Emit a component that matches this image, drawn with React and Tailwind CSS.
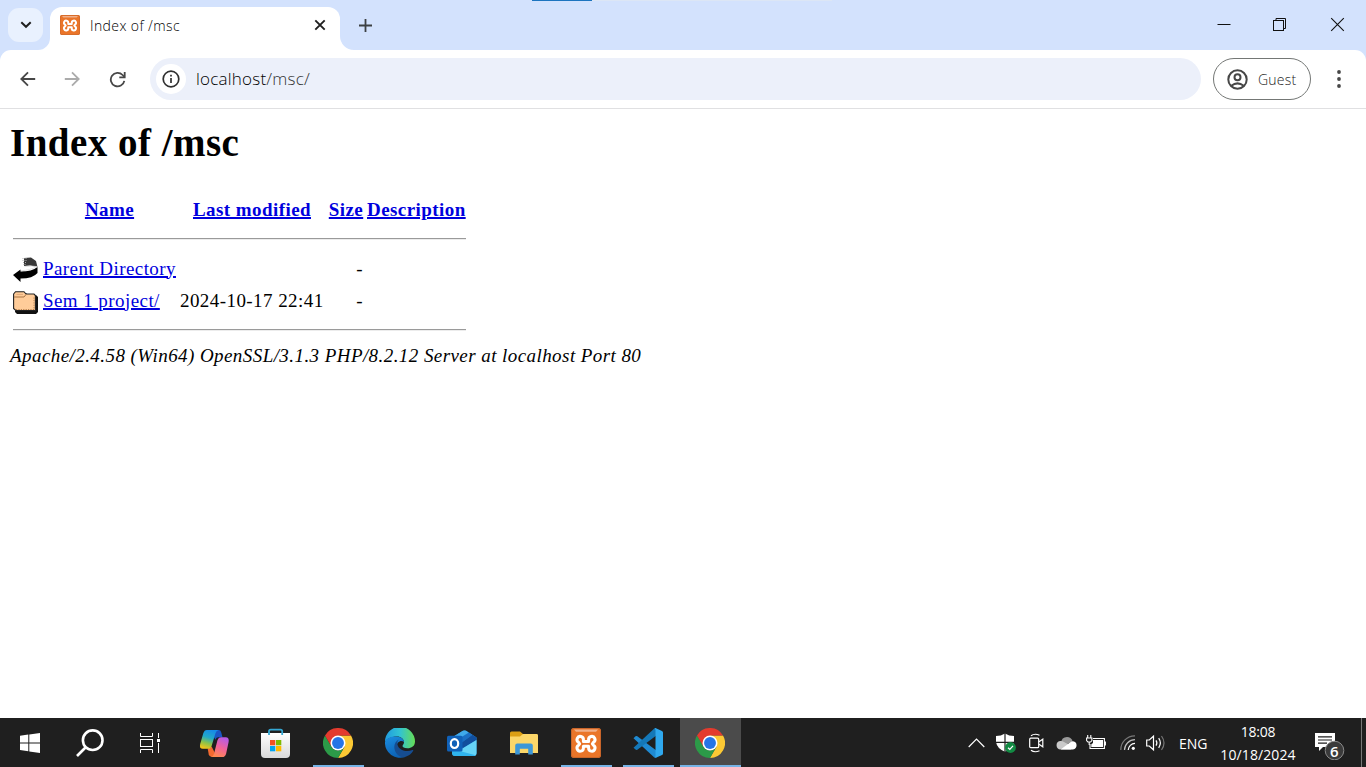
const Xampp = ({ size }) => (
  <svg width={size} height={size} viewBox="0 0 30 30" className="shrink-0">
    <rect width="30" height="30" rx="3" fill="#ea7529" />
    <rect x="0.5" y="0.5" width="29" height="29" rx="2.5" fill="none" stroke="#c9652a" />
    <path d="M3 1.5H27L25 3.8H5Z" fill="#f0b08a" />
    <path
      d="M12.4 12V13.6H17.6V12A3.2 3.2 0 1 1 22.4 14.4L21.4 15.8L22.4 17.2A3.2 3.2 0 1 1 17.6 19.8V18.2H12.4V19.8A3.2 3.2 0 1 1 7.6 17.2L8.6 15.8L7.6 14.4A3.2 3.2 0 1 1 12.4 12Z"
      fill="none"
      stroke="#fff"
      strokeWidth="3"
      strokeLinejoin="round"
    />
  </svg>
);

const Chrome = () => (
  <svg width="30" height="30" viewBox="0 0 48 48">
    <path d="M24 12H44.8A24 24 0 0 1 24 48L34.4 30Z" fill="#fcc934" />
    <path d="M3.2 12L13.6 30A12 12 0 0 0 34.4 30L24 48A24 24 0 0 1 3.2 12Z" fill="#2c9a48" />
    <path d="M3.2 12L13.6 30L24 12H44.8A24 24 0 0 0 3.2 12Z" fill="#e33b2e" />
    <circle cx="24" cy="24" r="12" fill="#fff" />
    <circle cx="24" cy="24" r="9.5" fill="#2674e6" />
  </svg>
);

const Copilot = () => (
  <svg width="31" height="29" viewBox="0 0 32 30">
    <defs>
      <linearGradient id="cpA" x1="0.6" y1="0" x2="0.3" y2="1">
        <stop offset="0" stopColor="#168be8" />
        <stop offset="0.4" stopColor="#22a9c8" />
        <stop offset="0.7" stopColor="#8bc34a" />
        <stop offset="1" stopColor="#f5c518" />
      </linearGradient>
      <linearGradient id="cpB" x1="0.7" y1="0" x2="0.3" y2="1">
        <stop offset="0" stopColor="#b45be8" />
        <stop offset="0.5" stopColor="#f0629a" />
        <stop offset="1" stopColor="#ff8a4c" />
      </linearGradient>
    </defs>
    <path d="M15 1H20.5Q22.3 1 23 3.5L24.3 8.5H20Q17.8 8.5 17 11L14 6Z" fill="#1a55c4" />
    <path d="M9 20.5L13 18L16 24L15.5 29H13Q10.8 29 10 26Z" fill="#f26a30" />
    <path d="M8 1H20Q17.8 1.6 17 4.5L13 17.5Q12 20.5 9 20.5H4Q0 20.5 1.2 15.5L4.4 4.5Q5.5 1 8 1Z" fill="url(#cpA)" />
    <path d="M24 29H12.5Q14.7 28.5 15.5 25.5L19 12Q20 8.5 23 8.5H27.5Q31.5 8.5 30.6 13.5L28 25.5Q27 29 24 29Z" fill="url(#cpB)" />
  </svg>
);

const Store = () => (
  <svg width="30" height="30" viewBox="0 0 30 30">
    <defs>
      <linearGradient id="st" x1="0" y1="0" x2="0" y2="1">
        <stop offset="0" stopColor="#fff" />
        <stop offset="1" stopColor="#d9d9d9" />
      </linearGradient>
    </defs>
    <path d="M0 5H29V26Q29 30 25 30H4Q0 30 0 26Z" fill="url(#st)" />
    <path d="M8 7V3.2Q8 1.6 9.7 1.6H19.5Q21.2 1.6 21.2 3.2V7" fill="none" stroke="#35a8d4" strokeWidth="1.8" />
    <rect x="9" y="12" width="5.3" height="5.3" fill="#f25022" />
    <rect x="15" y="12" width="5.3" height="5.3" fill="#7fba00" />
    <rect x="9" y="18" width="5.3" height="5.3" fill="#00a4ef" />
    <rect x="15" y="18" width="5.3" height="5.3" fill="#ffb900" />
  </svg>
);

const Edge = () => (
  <svg width="30" height="30" viewBox="0 0 30 30">
    <defs>
      <linearGradient id="edA" x1="0" y1="0.4" x2="1" y2="0.4">
        <stop offset="0" stopColor="#1f9be0" />
        <stop offset="0.5" stopColor="#32c3d2" />
        <stop offset="1" stopColor="#66dd55" />
      </linearGradient>
      <linearGradient id="edB" x1="0" y1="0" x2="0.4" y2="1">
        <stop offset="0" stopColor="#1c8ee0" />
        <stop offset="1" stopColor="#0c62b5" />
      </linearGradient>
    </defs>
    <path d="M0 14A15 15 0 0 1 30 13.5C30 18 26.5 20.3 22.5 20.3C19 20.3 17.5 19 17.5 18C17.5 17 19 16.5 19 14C19 11 16 8.5 12 8.5C6 8.5 1 11 0 14Z" fill="url(#edA)" />
    <path d="M0 14C1 10.5 5.5 8.5 10.5 8.5C16 8.5 19 11.5 19 14C16 11.5 11.5 14 11.5 19C11.5 24 15 29 20.5 28.8A15 15 0 0 1 0 14Z" fill="url(#edB)" />
    <path d="M14 11.6C11 13 9.3 16 9.3 19C9.3 25 14.5 29.8 19.5 29.2C23.5 28.2 26.8 25.6 28.2 22.8C28.5 22 28 21.7 27.4 22C20 25.2 12.3 21 12.3 15.3C12.3 13.8 13 12.5 14 11.6Z" fill="#164d91" />
  </svg>
);

const Outlook = () => (
  <svg width="30" height="30" viewBox="0 0 30 30">
    <path d="M5 9.5L16 2.8Q17.5 2 19 2.8L29.5 9.5V25Q29.5 28 26.5 28H8Q5 28 5 25Z" fill="#2f9fe6" />
    <path d="M5 9.5L16 2.8Q17.5 2 19 2.8L21.5 4.4L9 12.5H5Z" fill="#3fa9ea" />
    <path d="M9 12.5L22 4.6L25.5 6.8L14 15Z" fill="#1b6fc4" />
    <path d="M14 15L25.5 6.8L29.5 9.5V12L15.5 20.5Z" fill="#114f9e" />
    <path d="M29.5 12L13 22L11 28H26.5Q29.5 28 29.5 25Z" fill="#66d4f6" />
    <path d="M9 22L28.5 27.3Q27.7 28 26.5 28H8Q5.5 28 5 25.5V22Z" fill="#2fb4ee" />
    <rect x="0" y="7.8" width="15.5" height="15.6" rx="1.5" fill="#1061b8" />
    <ellipse cx="7.5" cy="15.6" rx="3.7" ry="4.4" fill="none" stroke="#fff" strokeWidth="2.2" />
  </svg>
);

const Folder = () => (
  <svg width="28" height="26" viewBox="0 0 28 26">
    <path d="M0 3Q0 1.5 1.5 1.5H10L13 4H26.5Q28 4 28 5.5V8H0Z" fill="#dc9f14" />
    <path d="M0 6.5H10L13 4H26.5Q28 4 28 5.5V23H0Z" fill="#fbd669" />
    <path d="M5.2 24.5V15.5Q5.2 13.5 7.2 13.5H20.8Q22.8 13.5 22.8 15.5V24.5H18.2V18.8H9.8V24.5Z" fill="#3c97d8" />
  </svg>
);

const VSCode = () => (
  <svg width="30" height="30" viewBox="0 0 30 30">
    <path d="M0.5 10.2L2.5 8.3Q3.4 7.7 4.3 8.3L24 23V29L21.3 29.4Z" fill="#1f8ad2" />
    <path d="M0.5 19.8L2.5 21.6Q3.4 22.3 4.3 21.7L24 7V1L21.3 0.6Z" fill="#1478b8" />
    <path d="M21.3 0.4Q22.4 -0.2 23.5 0.4L29 3Q30 3.5 30 4.6V25.4Q30 26.5 29 27L23.5 29.6Q22.4 30.2 21.3 29.4Q22.5 29.6 22.5 27.8V2.2Q22.5 0.4 21.3 0.4Z" fill="#2fa8ee" />
  </svg>
);

const UpArrow = () => (
  <svg width="25" height="27" viewBox="0 0 25 27" className="block">
    <path d="M11 2L18 1.5L23 5L24.5 11L17 9.5L11 10Z" fill="#383838" />
    <path d="M9.5 2.5H14M9.5 4.5H14M10 6.5H13M10.5 8.5H13" stroke="#aaa" strokeDasharray="1 1" />
    <path d="M24.5 11V17Q20 22.5 7.5 22.5V26L0 19L7.5 13.5V15.5Q19 15.5 24.5 11Z" fill="#000" />
    <path d="M8 14.8Q18 14 23.8 10.6Q19 9.6 11.5 10.6" fill="none" stroke="#ddd" strokeWidth="0.8" />
  </svg>
);

const DirIcon = () => (
  <svg width="25" height="23" viewBox="0 0 25 23" className="block">
    <path d="M3 2H13L15 4H23L25 6V21L23 23H4L2 21Z" fill="#111" />
    <path d="M0.6 3L2.5 0.7H11L13 3H21L22.4 4.5V19.5H2.8L0.6 17.5Z" fill="#ffcc99" stroke="#222" strokeWidth="1.1" />
    <path d="M1 6H11L13 3.5" stroke="#a87445" fill="none" />
    <path d="M3.5 3.4H10" stroke="#e0a878" />
    <path d="M3 18.5H21V6" fill="none" stroke="#b9824f" strokeDasharray="1.2 1.2" />
  </svg>
);

const Slot = ({ children, wide, running, active }) => (
  <div
    className={
      "relative flex h-full shrink-0 items-center justify-center pt-[1px] " +
      (active ? "ml-[1px] w-[61px] bg-[#4b4b4b] pr-[1px]" : wide ? "w-[62px]" : "w-[60px]")
    }
  >
    {children}
    {running && (
      <div className={"absolute bottom-0 h-[2px] bg-[#76b3e6] " + (active ? "inset-x-0" : "left-[6px] right-[5px]")} />
    )}
  </div>
);

const Tray = ({ children }) => <div className="flex h-full w-[30px] items-center justify-center">{children}</div>;

const linkCls = "text-[#0000dd] underline decoration-[1.5px]";

export default function App() {
  return (
    <div className="flex h-[767px] w-[1366px] flex-col overflow-hidden bg-white font-['Open_Sans',sans-serif]">
      <header className="relative flex h-[50px] shrink-0 bg-[#d3e2fd]">
        <div className="absolute left-[532px] top-0 flex h-[1px] w-[300px] bg-[#dce6f5]">
          <div className="h-full w-[60px] bg-[#1c74bf]" />
        </div>
        <div className="ml-[8px] mt-[8px] flex h-[34px] w-[35px] items-center justify-center rounded-[11px] bg-[#e9f1fe]">
          <svg width="12" height="8" viewBox="0 0 12 8" fill="none" stroke="#1f1f1f" strokeWidth="2">
            <path d="M1.3 1.3L6 5.8L10.7 1.3" />
          </svg>
        </div>
        <div className="relative ml-[7px] mt-[7px] flex h-[43px] w-[290px] items-center rounded-t-[12px] bg-white pb-[7px] pl-[10px]">
          <svg className="absolute -left-[12px] bottom-0" width="12" height="12" viewBox="0 0 12 12">
            <path d="M12 0V12H0A12 12 0 0 0 12 0Z" fill="#fff" />
          </svg>
          <svg className="absolute -right-[14px] bottom-0" width="14" height="14" viewBox="0 0 14 14">
            <path d="M0 0V14H14A14 14 0 0 1 0 0Z" fill="#fff" />
          </svg>
          <Xampp size={20} />
          <span className="ml-[10px] w-[220px] text-[14px] font-[350] tracking-[0.4px] text-black">Index of /msc</span>
          <svg className="ml-[4px]" width="12" height="12" viewBox="0 0 12 12" stroke="#1f1f1f" strokeWidth="1.9">
            <path d="M1.3 1.3L10.7 10.7M10.7 1.3L1.3 10.7" />
          </svg>
        </div>
        <svg className="ml-[19px] mt-[19px]" width="13" height="13" viewBox="0 0 13 13" stroke="#3c4043" strokeWidth="1.8">
          <path d="M6.5 0V13M0 6.5H13" />
        </svg>
        <div className="ml-auto mr-[21px] mt-[17px] flex items-start">
          <svg className="mr-[42px]" width="14" height="15" viewBox="0 0 14 15" stroke="#111">
            <path d="M0.5 7.5H13.5" />
          </svg>
          <svg className="mr-[43px]" width="14" height="15" viewBox="0 0 14 15" fill="none" stroke="#111">
            <rect x="0.5" y="3.5" width="10" height="10" />
            <path d="M3 3V1.5H12.5V11.5H11" />
          </svg>
          <svg width="15" height="15" viewBox="0 0 15 15" stroke="#111" strokeWidth="1.1">
            <path d="M1.2 1.2L13.8 13.8M13.8 1.2L1.2 13.8" />
          </svg>
        </div>
      </header>

      <div className="h-[59px] shrink-0 bg-[#d3e2fd]">
        <div className="flex h-full items-center rounded-t-[11px] border-b border-[#e0e0e2] bg-white">
          <svg className="ml-[20px] shrink-0" width="16" height="16" viewBox="0 0 16 16" fill="none" stroke="#474747" strokeWidth="1.8">
            <path d="M15.2 8H1.5M8 1.3L1.3 8L8 14.7" />
          </svg>
          <svg className="ml-[28px] shrink-0" width="16" height="16" viewBox="0 0 16 16" fill="none" stroke="#ababab" strokeWidth="1.8">
            <path d="M0.8 8H14.5M8 1.3L14.7 8L8 14.7" />
          </svg>
          <svg className="ml-[29px] shrink-0" width="17" height="17" viewBox="0 0 17 17" fill="none" stroke="#474747" strokeWidth="1.8">
            <path d="M15.3 9.8A6.8 6.8 0 1 1 13.6 4L15.5 6" />
            <path d="M15.7 1V6.4H10.3" />
          </svg>
          <div className="ml-[24px] flex h-[42px] w-[1051px] items-center rounded-full bg-[#ecf0fa] pl-[6px]">
            <div className="flex size-[30px] items-center justify-center rounded-full bg-white">
              <svg width="18" height="18" viewBox="0 0 18 18" fill="none" stroke="#303030" strokeWidth="1.7">
                <circle cx="9" cy="9" r="7.8" />
                <path d="M9 8V13M9 4.8V6.6" />
              </svg>
            </div>
            <span className="ml-[10px] text-[17px] font-[350] tracking-[0.22px] text-black">
              localhost<span className="text-[#333]">/msc/</span>
            </span>
          </div>
          <div className="ml-[12px] flex h-[42px] w-[98px] items-center rounded-full border border-[#747775] pl-[13px]">
            <svg width="21" height="21" viewBox="0 0 21 21" fill="none" stroke="#474747" strokeWidth="2">
              <circle cx="10.5" cy="10.5" r="9.2" />
              <circle cx="10.5" cy="8.3" r="3" />
              <path d="M4.3 16.8Q10.5 12 16.7 16.8" />
            </svg>
            <span className="ml-[10px] text-[14px] font-[350] tracking-[0.2px] text-[#222]">Guest</span>
          </div>
          <svg className="ml-[26px]" width="4" height="18" viewBox="0 0 4 18" fill="#474747">
            <circle cx="2" cy="2" r="1.9" />
            <circle cx="2" cy="9" r="1.9" />
            <circle cx="2" cy="16" r="1.9" />
          </svg>
        </div>
      </div>

      <main className="flex-1 pl-[10px] pt-[11px] font-['Liberation_Serif',serif] text-[19px] leading-[23px] tracking-[0.43px] text-black">
        <h1 className="text-[39px] font-bold leading-[46px] tracking-[0.48px]">Index of /msc</h1>
        <div className="ml-[3px] mt-[32px] w-[453px]">
          <div className="flex h-[23px] font-bold">
            <div className="w-[30px]" />
            <div className="w-[133px] text-center"><a className={linkCls}>Name</a></div>
            <div className="ml-[4px] w-[144px] text-center"><a className={linkCls}>Last modified</a></div>
            <div className="ml-[4px] w-[36px] text-center"><a className={linkCls}>Size</a></div>
            <div className="ml-[3px] whitespace-nowrap"><a className={linkCls}>Description</a></div>
          </div>
          <div className="mt-[17px] h-[2px] border-b border-t border-b-[#ececec] border-t-[#9a9a9a]" />
          <div className="mt-[15px] flex h-[28px] items-center pb-[2px]">
            <div className="w-[30px] pt-[2px]"><UpArrow /></div>
            <div className="w-[137px] whitespace-nowrap"><a className={linkCls}>Parent Directory</a></div>
            <div className="w-[144px]" />
            <div className="w-[39px] text-right">-</div>
          </div>
          <div className="mt-[4px] flex h-[28px] items-center pb-[2px]">
            <div className="w-[30px] pt-[5px]"><DirIcon /></div>
            <div className="w-[137px] whitespace-nowrap"><a className={linkCls}>Sem 1 project/</a></div>
            <div className="w-[144px] whitespace-nowrap">2024-10-17 22:41</div>
            <div className="w-[39px] text-right">-</div>
          </div>
          <div className="mt-[14px] h-[2px] border-b border-t border-b-[#ececec] border-t-[#9a9a9a]" />
        </div>
        <address className="mt-[13px] italic">Apache/2.4.58 (Win64) OpenSSL/3.1.3 PHP/8.2.12 Server at localhost Port 80</address>
      </main>

      <footer className="flex h-[49px] shrink-0 items-center bg-[#1f1f1f] text-white">
        <Slot>
          <svg width="20" height="20" viewBox="0 0 20 20" fill="#fff">
            <path d="M0 2.8L8.3 1.6V9.4H0ZM9.3 1.4L20 0V9.4H9.3ZM0 10.5H8.3V18.3L0 17.1ZM9.3 10.5H20V20L9.3 18.5Z" />
          </svg>
        </Slot>
        <Slot>
          <svg width="28" height="28" viewBox="0 0 28 28" fill="none" stroke="#fff" strokeWidth="2.6">
            <circle cx="16.7" cy="11.2" r="9.8" />
            <path d="M10 18L1 27" />
          </svg>
        </Slot>
        <Slot>
          <svg width="20" height="20" viewBox="0 0 20 20" fill="none" stroke="#fff" strokeWidth="1">
            <path d="M0.5 0V3.5H12.5V0M0.5 20V16.5H12.5V20" />
            <rect x="0.5" y="6.5" width="12" height="7" />
            <path d="M18.5 0V5M18.5 10V20" />
            <rect x="17.5" y="6.5" width="2" height="2" fill="#fff" />
          </svg>
        </Slot>
        <div className="w-[3px]" />
        <Slot wide><Copilot /></Slot>
        <Slot wide><Store /></Slot>
        <Slot wide running><Chrome /></Slot>
        <Slot wide><Edge /></Slot>
        <Slot wide><Outlook /></Slot>
        <Slot wide><Folder /></Slot>
        <Slot wide running><Xampp size={30} /></Slot>
        <Slot wide running><VSCode /></Slot>
        <Slot running active><Chrome /></Slot>

        <div className="ml-auto flex h-full items-center">
          <Tray>
            <svg width="17" height="10" viewBox="0 0 17 10" fill="none" stroke="#fff" strokeWidth="1.2">
              <path d="M0.7 9L8.5 1.2L16.3 9" />
            </svg>
          </Tray>
          <Tray>
            <svg width="20" height="20" viewBox="0 0 20 20">
              <path d="M9 0.5Q13 3 18 3V9Q17 15.5 9 18.8Q1 15.5 0 9V3Q5 3 9 0.5Z" fill="#fff" />
              <path d="M9 0V19M0 9.3H18" stroke="#1f1f1f" strokeWidth="1.2" />
              <circle cx="14.5" cy="14.5" r="5.4" fill="#128a43" />
              <path d="M12 14.7L13.8 16.4L17 12.8" stroke="#fff" strokeWidth="1.2" fill="none" />
            </svg>
          </Tray>
          <Tray>
            <svg width="15" height="20" viewBox="0 0 15 20" fill="none" stroke="#fff" strokeWidth="1.2">
              <rect x="0.7" y="5.2" width="9" height="9.5" rx="1" />
              <path d="M10 8.7L13.8 6.2V13.8L10 11.3M2 2.8Q5.5 0 10.5 2.2M2 17.2Q5.5 20 10.5 17.8" />
            </svg>
          </Tray>
          <Tray>
            <svg width="21" height="14" viewBox="0 0 21 14">
              <path d="M5 7Q5.5 1 11 1Q15 1 16.5 5L10 9Z" fill="#999" />
              <path d="M4.5 13.5A4.3 4.3 0 0 1 4 5Q6 4.5 8 6L17 11L15 13.5Z" fill="#c9c9c9" />
              <path d="M5 13.2L14 6.5Q15.3 5 17 5.2A4.2 4.2 0 0 1 17 13.5H5Z" fill="#fff" />
            </svg>
          </Tray>
          <Tray>
            <svg width="20" height="16" viewBox="0 0 20 16" fill="none" stroke="#fff" strokeWidth="1.1">
              <path d="M7 3.5H18.4V13.5H4V9M19.4 6.5V10.5" />
              <path d="M7 5H17V12H5.3V9.3L7 8Z" fill="#fff" stroke="none" />
              <path d="M1.7 0V3M4.8 0V3M0.6 3H5.9V5.5L4.6 7H1.9L0.6 5.5ZM3.2 7V10" />
            </svg>
          </Tray>
          <div className="flex w-[32px] justify-center">
            <svg width="15" height="15" viewBox="0 0 15 15" fill="none" strokeWidth="1.2">
              <path d="M0.8 15A14 14 0 0 1 15 0.8" stroke="#777" />
              <path d="M4.5 15A10.5 10.5 0 0 1 15 4.7" stroke="#bbb" />
              <path d="M8.2 15A7 7 0 0 1 15 8.4" stroke="#fff" />
              <circle cx="13.3" cy="13.3" r="1.6" fill="#fff" />
            </svg>
          </div>
          <div className="flex w-[25px] justify-center">
            <svg width="20" height="18" viewBox="0 0 20 18" fill="none" stroke="#fff" strokeWidth="1.2">
              <path d="M0.7 6H3.3L7.5 2.2V15.8L3.3 12H0.7Z" />
              <path d="M10 6.3Q11.8 9 10 11.7" />
              <path d="M12.7 4.2Q16 9 12.7 13.8" />
              <path d="M15.5 2Q20.5 9 15.5 16" stroke="#777" />
            </svg>
          </div>
          <span className="ml-[11px] w-[30px] pt-[1px] text-[14px]">ENG</span>
          <div className="ml-[10px] flex w-[78px] flex-col items-center whitespace-nowrap text-[14px] leading-[23px]">
            <span className="tracking-[-0.2px]">18:08</span>
            <span className="tracking-[0.1px]">10/18/2024</span>
          </div>
          <div className="relative ml-[18px] h-[34px] w-[31px]">
            <svg width="31" height="34" viewBox="0 0 31 34" className="block">
              <path d="M0 7H20V21H8L4 25V21H0Z" fill="#fff" />
              <path d="M3 10.8H17M3 14H17M3 17.2H12" stroke="#1f1f1f" strokeWidth="1.2" />
              <circle cx="19.5" cy="24.5" r="9.3" fill="#3a3a3a" stroke="#8a8a8a" />
            </svg>
            <span className="absolute left-[15px] top-[16px] text-[15px] font-semibold leading-[19px]">6</span>
          </div>
          <div className="ml-[15px] mr-[4px] h-[49px] w-[1px] bg-[#777]" />
        </div>
      </footer>
    </div>
  );
}
